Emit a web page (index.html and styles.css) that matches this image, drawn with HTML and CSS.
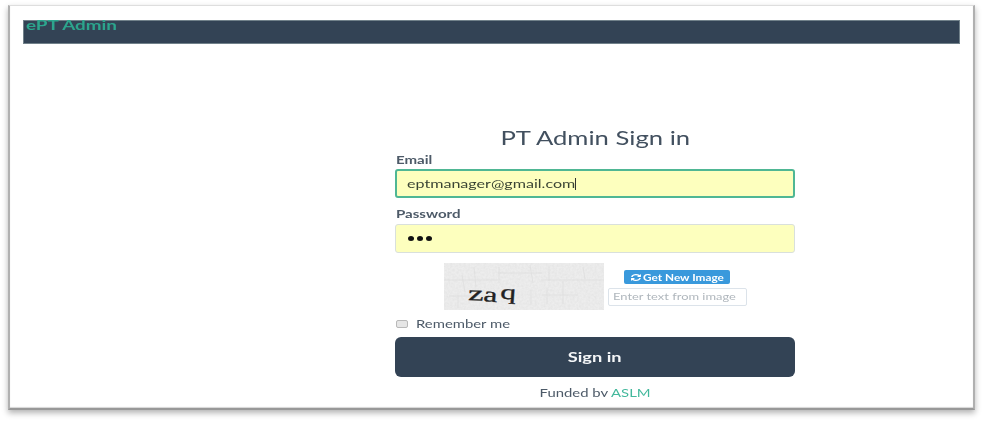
FILE: index.html
```html
<!DOCTYPE html>
<html lang="en">
<head>
<meta charset="utf-8">
<title>ePT Admin</title>
<link rel="stylesheet" href="styles.css">
</head>
<body>
<main class="frame">
  <header class="navbar"><span class="wide brand">ePT Admin</span></header>
  <form class="signin">
    <h1 class="title"><span class="wide">PT Admin Sign in</span></h1>
    <label class="label"><span class="wide">Email</span></label>
    <div class="field focused"><span class="wide value">eptmanager@gmail.com</span><i class="caret"></i></div>
    <label class="label second"><span class="wide">Password</span></label>
    <div class="field"><i class="dot"></i><i class="dot"></i><i class="dot"></i></div>
    <div class="captcha">
      <svg class="captcha-image" width="160" height="47" viewBox="0 0 160 47">
        <defs>
          <filter id="grain" x="0" y="0" width="100%" height="100%">
            <feTurbulence type="fractalNoise" baseFrequency=".45" numOctaves="2" seed="4"/>
            <feColorMatrix values="0 0 0 0 .5  0 0 0 0 .5  0 0 0 0 .5  .28 0 0 0 -.08"/>
          </filter>
        </defs>
        <rect width="160" height="47" fill="#ededed"/>
        <rect width="160" height="47" filter="url(#grain)"/>
        <path d="M0 17H54M18 12l3 17M30 4l2 20M55 4v16M54 10H98M86 2l3 18M97 17H160M105 4v14M119 18v23M139 4l2 12M98 32h36M5 33h40M87 27v15M103 25v16M14 32v13" fill="none" stroke="#dedede" stroke-width=".8"/>
        <g class="captcha-text">
          <text transform="translate(24 37) rotate(2) scale(1.65 1)">z</text>
          <text transform="translate(39 38) rotate(5) scale(1.5 1)">a</text>
          <text transform="translate(56 35.500) rotate(4) scale(1.5 1)">q</text>
        </g>
      </svg>
      <div class="captcha-controls">
        <div class="refresh">
          <svg class="refresh-icon" viewBox="0 0 1536 1536" preserveAspectRatio="none"><path fill="#fff" d="M1511 928q0 5-1 7-64 268-268 434.500T764 1536q-146 0-282.500-55T238 1324l-129 129q-19 19-45 19t-45-19-19-45V960q0-26 19-45t45-19h448q26 0 45 19t19 45-19 45l-137 137q71 66 161 102t187 36q134 0 250-65t186-179q11-17 53-117 8-23 30-23h192q13 0 22.500 9.500t9.500 22.500zm25-800v448q0 26-19 45t-45 19h-448q-26 0-45-19t-19-45 19-45l138-138Q969 256 768 256q-134 0-250 65T332 500q-11 17-53 117-8 23-30 23H50q-13 0-22.500-9.500T18 608v-7q65-268 270-434.500T768 0q146 0 284 55.500T1297 212l130-129q19-19 45-19t45 19 19 45z"/></svg>
          <span class="wide">Get New Image</span>
        </div>
        <div class="answer"><span class="wide">Enter text from image</span></div>
      </div>
    </div>
    <div class="remember"><i class="box"></i><span class="wide">Remember me</span></div>
    <div class="submit"><span class="wide">Sign in</span></div>
    <footer class="funded"><span class="wide">Funded by <a class="link">ASLM</a></span></footer>
  </form>
</main>
</body>
</html>
```
FILE: styles.css
```css
* { box-sizing: border-box; }
body {
  margin: 0;
  width: 983px;
  height: 422px;
  padding: 5px 0 0 8px;
  background: #fff;
  overflow: hidden;
  font-family: Lato, "Liberation Sans", sans-serif;
  font-size: 11px;
  color: #4d5a68;
}
.frame {
  width: 967px;
  height: 405px;
  padding: 14px 13px 0 13px;
  background: #fff;
  border: 2px solid;
  border-top: 1px solid;
  border-color: #dedede #b0b0b0 #989898 #b0b0b0;
  box-shadow: 0 3px 6px rgba(0, 0, 0, .3), inset 0 -1px 1px #d5d5d5;
}
.wide {
  display: inline-block;
  white-space: nowrap;
  transform: scaleX(1.35);
  transform-origin: 0 50%;
}
.navbar {
  height: 24px;
  background: #334355;
  border: 1px solid #71818a;
}
.brand {
  display: block;
  width: fit-content;
  margin: -3px 0 0 2px;
  font-size: 13px;
  line-height: 15px;
  font-weight: 700;
  color: #2ca58d;
  transform: scaleX(1.45);
}
.signin {
  width: 400px;
  margin: 82px 0 0 372px;
}
.title {
  margin: 0;
  height: 24px;
  line-height: 24px;
  font-size: 19px;
  font-weight: 400;
  text-align: center;
  color: #42505f;
}
.title .wide, .submit .wide, .funded .wide { transform-origin: 50% 50%; }
.label {
  display: block;
  height: 19px;
  padding-left: .5px;
  line-height: 19px;
  font-weight: 700;
}
.label .wide { transform: scaleX(1.37); }
.second { height: 26px; line-height: 32px; }
.field {
  display: flex;
  align-items: center;
  height: 29px;
  padding-left: 10px;
  background: #fdffbe;
  border: 1px solid #d9e0dc;
  border-radius: 3px;
}
.focused { border: 2px solid #4fb794; }
.value { width: 168px; color: #3a4434; font-size: 12px; transform: scaleX(1.34); }
.caret { width: 1px; height: 12px; background: #333; }
.dot {
  width: 6px;
  height: 5px;
  margin: 0 1px 0 2px;
  border-radius: 50%;
  background: #111;
}
.captcha {
  display: flex;
  height: 47px;
  margin: 10px 0 0 49px;
}
.captcha-image { display: block; }
.captcha-text {
  font: 21px "Liberation Serif", serif;
  fill: #222;
  stroke: #222;
  stroke-width: .3;
}
.captcha-controls { padding: 7px 0 0 4px; }
.refresh {
  display: flex;
  align-items: center;
  width: 106px;
  height: 14px;
  margin-left: 16px;
  padding-left: 7px;
  background: #3999dc;
  border-radius: 2px;
  color: #fff;
  font-size: 9px;
  font-weight: 700;
}
.refresh .wide { transform: scaleX(1.31); }
.refresh-icon { width: 10px; height: 7px; margin-right: 2px; }
.answer {
  width: 139px;
  height: 18px;
  margin-top: 4px;
  padding-left: 4px;
  border: 1px solid #dce3ea;
  border-radius: 2px;
  font-size: 10px;
  line-height: 15px;
  color: #b0b7bd;
}
.answer .wide { transform: scaleX(1.29); }
.remember {
  display: flex;
  align-items: center;
  height: 27px;
  line-height: 27px;
}
.box {
  width: 12px;
  height: 8px;
  margin: 1px 8px 0 1px;
  background: #e6e6e6;
  border: 1px solid #b9b9b9;
  border-radius: 2px;
}
.submit {
  height: 40px;
  line-height: 40px;
  background: #334355;
  border-radius: 6px;
  color: #f4f6f8;
  font-size: 14px;
  font-weight: 700;
  text-align: center;
}
.submit .wide { transform: scaleX(1.3); }
.funded {
  height: 20px;
  line-height: 32px;
  overflow: hidden;
  text-align: center;
}
.link { color: #43b89c; }
```
